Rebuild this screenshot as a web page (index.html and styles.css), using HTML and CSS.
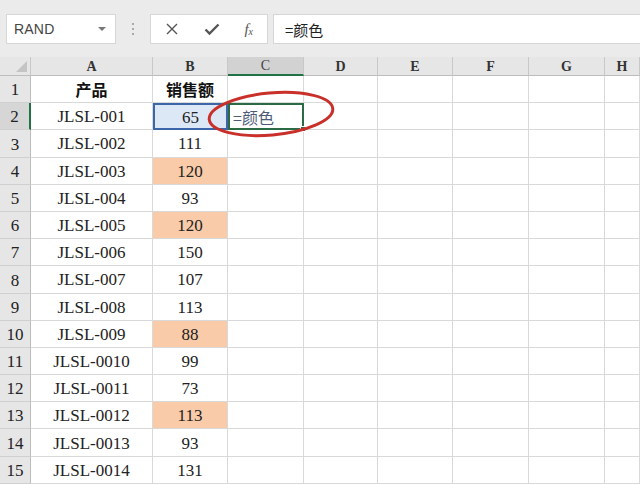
FILE: index.html
```html
<!DOCTYPE html>
<html lang="zh">
<head>
<meta charset="utf-8">
<link rel="stylesheet" href="styles.css">
</head>
<body>
<div class="app">
  <div class="toolbar">
    <div class="namebox"><span class="name">RAND</span><span class="caret"></span></div>
    <div class="dots"><i></i><i></i><i></i></div>
    <div class="fbtns">
      <svg class="ic" width="14" height="14" viewBox="0 0 14 14"><path d="M2 2L12 12M12 2L2 12" stroke="#555" stroke-width="1.4" fill="none"/></svg>
      <svg class="ic" width="16" height="14" viewBox="0 0 16 14"><path d="M1.5 7.5L5.5 11.5L14.5 2.5" stroke="#555" stroke-width="2.4" fill="none"/></svg>
      <span class="fx">f<sub>x</sub></span>
    </div>
    <div class="finput">=颜色</div>
  </div>
  <div class="sheet">
    <div class="corner"><span class="tri"></span></div>
    <div class="ch">A</div><div class="ch">B</div><div class="ch sel">C</div><div class="ch">D</div><div class="ch">E</div><div class="ch">F</div><div class="ch">G</div><div class="ch">H</div>

    <div class="rh">1</div><div class="c hd">产品</div><div class="c hd">销售额</div><div class="c"></div><div class="c"></div><div class="c"></div><div class="c"></div><div class="c"></div><div class="c"></div>
    <div class="rh rsel">2</div><div class="c">JLSL-001</div><div class="c num bsel">65</div><div class="c act">=颜色<span class="handle"></span></div><div class="c"></div><div class="c"></div><div class="c"></div><div class="c"></div><div class="c"></div>
    <div class="rh">3</div><div class="c">JLSL-002</div><div class="c num">111</div><div class="c"></div><div class="c"></div><div class="c"></div><div class="c"></div><div class="c"></div><div class="c"></div>
    <div class="rh">4</div><div class="c">JLSL-003</div><div class="c num or">120</div><div class="c"></div><div class="c"></div><div class="c"></div><div class="c"></div><div class="c"></div><div class="c"></div>
    <div class="rh">5</div><div class="c">JLSL-004</div><div class="c num">93</div><div class="c"></div><div class="c"></div><div class="c"></div><div class="c"></div><div class="c"></div><div class="c"></div>
    <div class="rh">6</div><div class="c">JLSL-005</div><div class="c num or">120</div><div class="c"></div><div class="c"></div><div class="c"></div><div class="c"></div><div class="c"></div><div class="c"></div>
    <div class="rh">7</div><div class="c">JLSL-006</div><div class="c num">150</div><div class="c"></div><div class="c"></div><div class="c"></div><div class="c"></div><div class="c"></div><div class="c"></div>
    <div class="rh">8</div><div class="c">JLSL-007</div><div class="c num">107</div><div class="c"></div><div class="c"></div><div class="c"></div><div class="c"></div><div class="c"></div><div class="c"></div>
    <div class="rh">9</div><div class="c">JLSL-008</div><div class="c num">113</div><div class="c"></div><div class="c"></div><div class="c"></div><div class="c"></div><div class="c"></div><div class="c"></div>
    <div class="rh">10</div><div class="c">JLSL-009</div><div class="c num or">88</div><div class="c"></div><div class="c"></div><div class="c"></div><div class="c"></div><div class="c"></div><div class="c"></div>
    <div class="rh">11</div><div class="c">JLSL-0010</div><div class="c num">99</div><div class="c"></div><div class="c"></div><div class="c"></div><div class="c"></div><div class="c"></div><div class="c"></div>
    <div class="rh">12</div><div class="c">JLSL-0011</div><div class="c num">73</div><div class="c"></div><div class="c"></div><div class="c"></div><div class="c"></div><div class="c"></div><div class="c"></div>
    <div class="rh">13</div><div class="c">JLSL-0012</div><div class="c num or">113</div><div class="c"></div><div class="c"></div><div class="c"></div><div class="c"></div><div class="c"></div><div class="c"></div>
    <div class="rh">14</div><div class="c">JLSL-0013</div><div class="c num">93</div><div class="c"></div><div class="c"></div><div class="c"></div><div class="c"></div><div class="c"></div><div class="c"></div>
    <div class="rh">15</div><div class="c">JLSL-0014</div><div class="c num">131</div><div class="c"></div><div class="c"></div><div class="c"></div><div class="c"></div><div class="c"></div><div class="c"></div>

    <svg class="ring" width="140" height="56" viewBox="0 0 140 56"><ellipse cx="70" cy="28" rx="62" ry="21" transform="rotate(-5 70 28)" fill="none" stroke="#c9302a" stroke-width="3"/></svg>
  </div>
</div>
</body>
</html>
```

FILE: styles.css
```css
* { box-sizing: border-box; }
html, body { margin: 0; padding: 0; }
body { width: 640px; height: 485px; overflow: hidden; background: #fff; font-family: "Liberation Serif", "Noto Sans CJK SC", serif; }
.app { display: flex; flex-direction: column; height: 485px; }

.toolbar { height: 57px; background: #ebebeb; display: flex; align-items: center; padding: 1px 0 0 6px; }
.namebox { width: 110px; height: 30px; background: #fff; border: 1px solid #d6d6d6; display: flex; align-items: center; justify-content: space-between; padding: 0 9px 0 7px; }
.name { font-family: "Liberation Sans", sans-serif; font-size: 14px; color: #444; letter-spacing: 0.2px; }
.caret { width: 0; height: 0; border-left: 4px solid transparent; border-right: 4px solid transparent; border-top: 4px solid #777; }
.dots { width: 34px; display: flex; flex-direction: column; align-items: center; gap: 3px; }
.dots i { display: block; width: 2px; height: 2px; background: #a9a9a9; }
.fbtns { width: 118px; height: 30px; background: #fff; border: 1px solid #d6d6d6; display: flex; align-items: center; justify-content: space-between; padding: 0 14px 0 14px; }
.fx { font-family: "Liberation Serif", serif; font-style: italic; font-size: 15px; color: #555; }
.fx sub { font-size: 10px; vertical-align: -1px; }
.finput { flex: 1; height: 30px; margin-left: 5px; background: #fff; border: 1px solid #d6d6d6; border-right: none; display: flex; align-items: center; padding-left: 11px; font-family: "Noto Sans CJK SC", sans-serif; font-size: 15px; color: #222; }

.sheet { position: relative; flex: 1; display: grid; grid-template-columns: 31px 122px 75px 76px 74px 75px 76px 76px 1fr; grid-template-rows: 19px repeat(15, 27.2px); overflow: hidden; }
.corner { background: #e6e6e6; border-right: 1px solid #c8c8c8; border-bottom: 1px solid #bdbdbd; position: relative; }
.tri { position: absolute; right: 3px; bottom: 3px; width: 0; height: 0; border-left: 11px solid transparent; border-bottom: 11px solid #c4c4c4; }
.ch { background: #e6e6e6; border-right: 1px solid #c8c8c8; border-bottom: 1px solid #bdbdbd; display: flex; align-items: center; justify-content: center; font-size: 14px; font-weight: bold; color: #333; padding-top: 1px; }
.ch.sel { background: #d2d2d2; border-bottom: 2px solid #217346; color: #444; font-weight: normal; }
.rh { background: #e6e6e6; border-right: 1px solid #bdbdbd; border-bottom: 1px solid #d0d0d0; display: flex; align-items: flex-end; justify-content: center; padding-bottom: 2px; font-size: 17px; color: #222; }
.rh.rsel { background: #d6d6d6; border-right: 2px solid #217346; }
.c { border-right: 1px solid #d9d9d9; border-bottom: 1px solid #d9d9d9; display: flex; align-items: center; justify-content: center; font-size: 17px; color: #222; white-space: nowrap; padding-top: 2px; }
.c.hd { font-family: "Noto Sans CJK SC", sans-serif; font-weight: bold; font-size: 16px; color: #111; padding-top: 0; }
.c.num { font-size: 17px; }
.c.or { background: #f9cba8; }
.c.bsel { background: #dde8f6; border: 2px solid #3b66a8; }
.c.act { position: relative; justify-content: flex-start; padding-left: 3px; padding-top: 0; font-family: "Noto Sans CJK SC", sans-serif; font-size: 16px; color: #4d5b78; border: 2px solid #2a6b46; }
.handle { position: absolute; right: -4px; bottom: -4px; width: 6px; height: 6px; background: #217346; border: 1px solid #fff; }
.ring { position: absolute; left: 201px; top: 29px; }
```
